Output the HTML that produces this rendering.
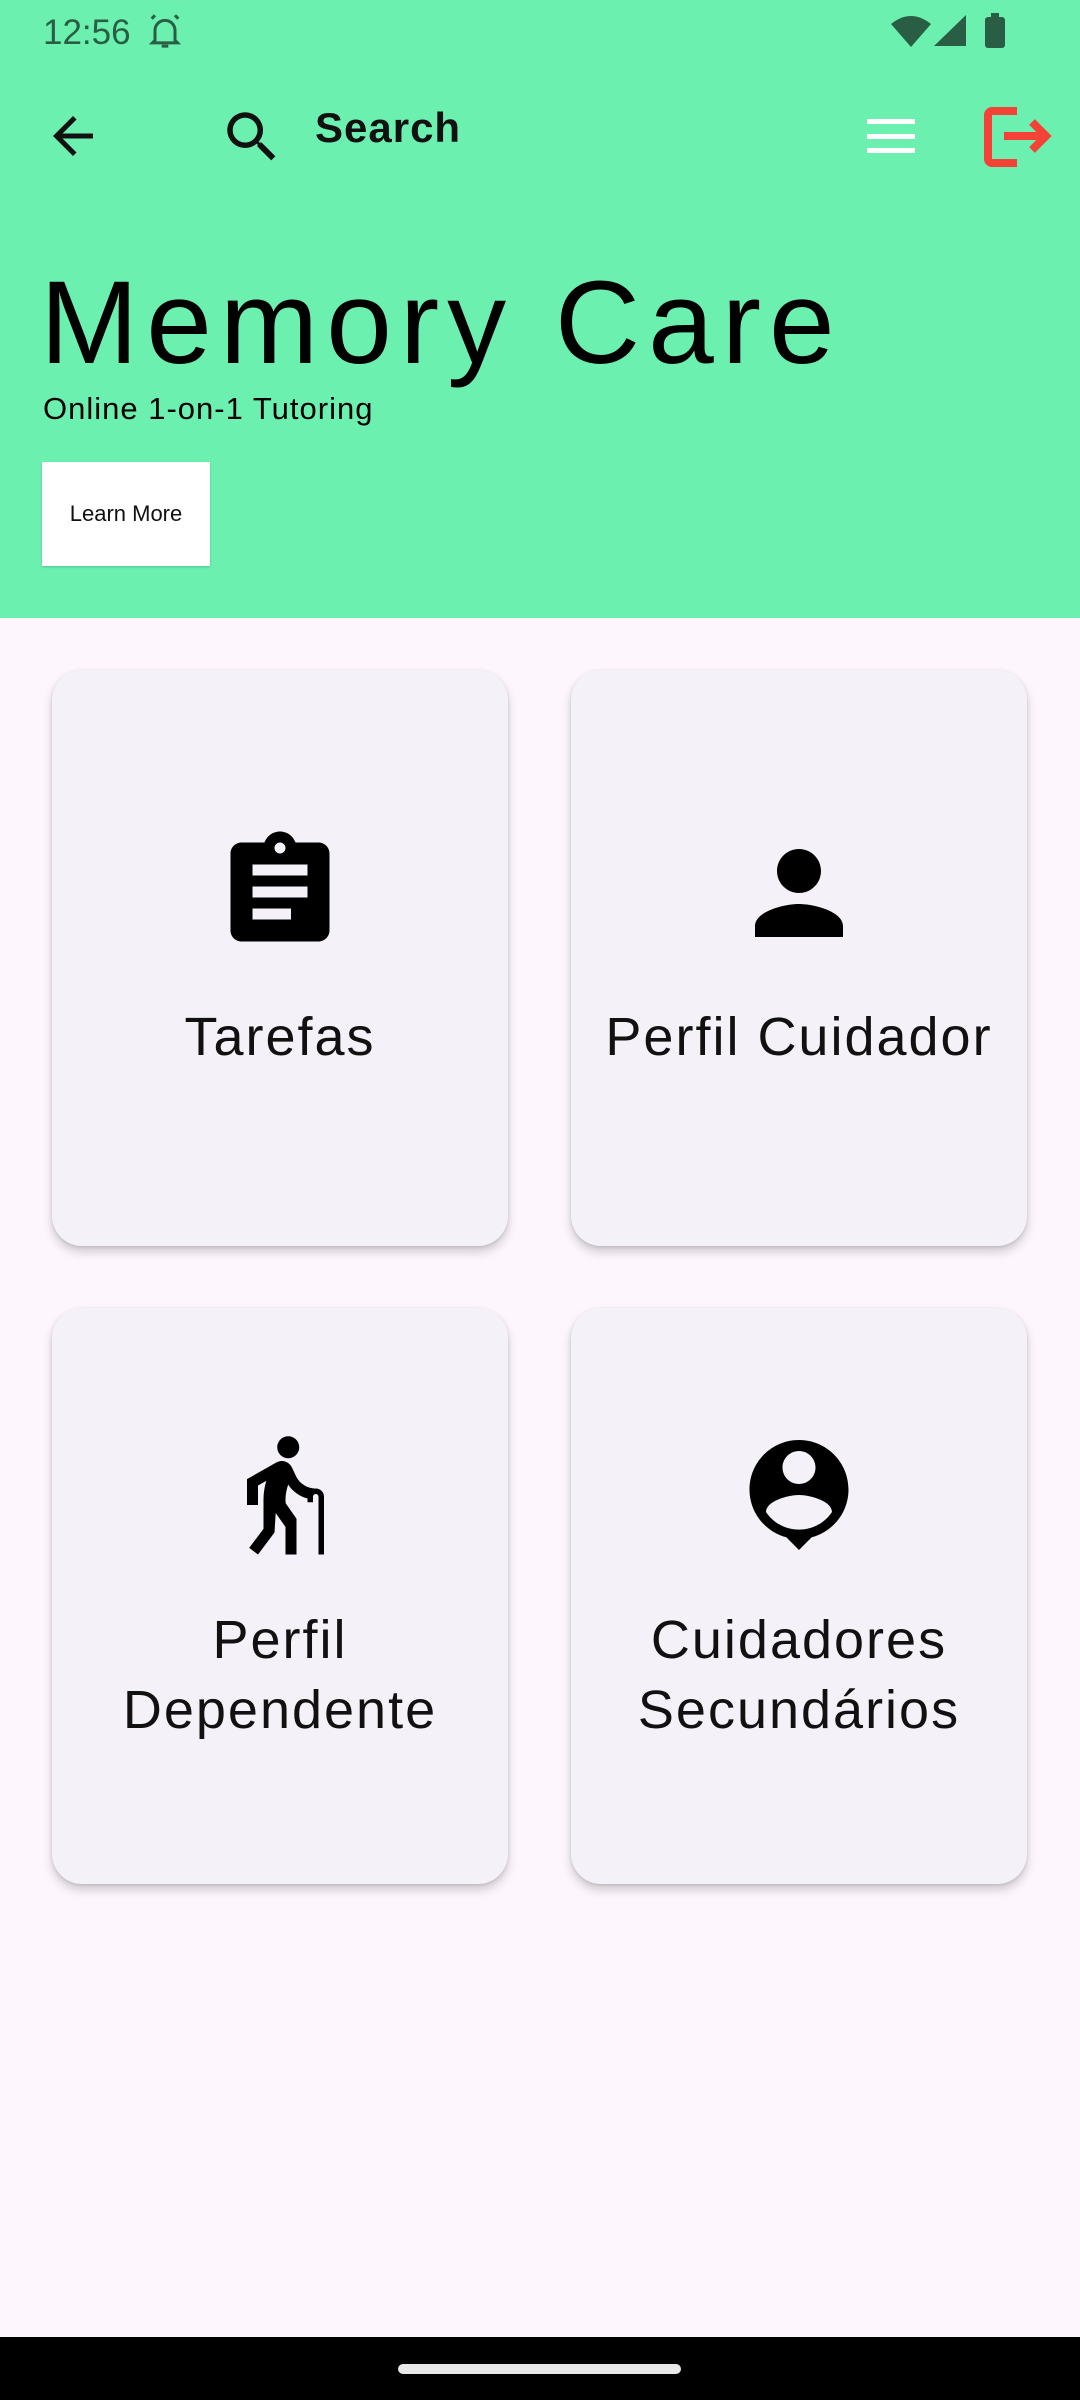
<!DOCTYPE html>
<html><head><meta charset="utf-8"><style>
*{margin:0;padding:0;box-sizing:border-box}
body{width:1080px;height:2400px;background:#fdf7fd;font-family:"Liberation Sans",sans-serif;position:relative;overflow:hidden}
.hdr{position:absolute;left:0;top:0;width:1080px;height:618px;background:#6cf0b0}
.abs{position:absolute}
.card{position:absolute;width:456px;height:576px;background:#f5f1f8;border-radius:30px;box-shadow:0 6px 10px rgba(0,0,0,0.18),0 1px 3px rgba(0,0,0,0.12)}
.lbl{position:absolute;left:0;width:100%;text-align:center;font-size:54px;letter-spacing:2px;color:#111;line-height:70px}
.card svg{position:absolute;width:132px;height:132px;left:162px}
</style></head><body>
<div class="hdr"></div>
<div class="abs" style="left:43px;top:13px;font-size:35px;color:#2a5e44">12:56</div>
<svg class="abs" style="left:145px;top:12px" width="40" height="40" viewBox="0 0 24 24"><path fill="none" stroke="#2a5e44" stroke-width="1.8" d="M6 17V11a6 6 0 0 1 12 0v6l1.5 1.5h-15zM10 20.5h4M4 4l2-2M20 4l-2-2"/></svg>
<svg class="abs" style="left:891px;top:14px" width="40" height="33" viewBox="0 0 40 33"><path fill="#2a5e44" d="M0 10Q20-6 40 10L20 33z"/></svg>
<svg class="abs" style="left:934px;top:15px" width="32" height="31"><path fill="#2a5e44" d="M32 0V31H0z"/></svg>
<div class="abs" style="left:985px;top:17px;width:20px;height:31px;background:#2a5e44;border-radius:3px"></div>
<div class="abs" style="left:991px;top:13px;width:8px;height:5px;background:#2a5e44"></div>
<svg class="abs" style="left:43px;top:106px" width="60" height="60" viewBox="0 0 24 24"><path fill="#111" d="M20 11H7.83l5.59-5.59L12 4l-8 8 8 8 1.41-1.41L7.83 13H20v-2z"/></svg>
<svg class="abs" style="left:219px;top:104px" width="66" height="66" viewBox="0 0 24 24"><path fill="#111" d="M15.5 14h-.79l-.28-.27A6.47 6.47 0 0 0 16 9.5 6.5 6.5 0 1 0 9.5 16c1.61 0 3.09-.59 4.23-1.57l.27.28v.79l5 4.99L20.49 19l-4.99-5zm-6 0C7.01 14 5 11.99 5 9.5S7.01 5 9.5 5 14 7.01 14 9.5 11.99 14 9.5 14z"/></svg>
<div class="abs" style="left:315px;top:104px;font-size:42px;font-weight:bold;color:#111;letter-spacing:1px">Search</div>
<div class="abs" style="left:867px;top:119px;width:48px;height:5px;background:#fff"></div>
<div class="abs" style="left:867px;top:134px;width:48px;height:5px;background:#fff"></div>
<div class="abs" style="left:867px;top:148px;width:48px;height:5px;background:#fff"></div>
<svg class="abs" style="left:980px;top:104px" width="76" height="66" viewBox="0 0 76 66"><path fill="none" stroke="#f44336" stroke-width="8" d="M37 7H12a4 4 0 0 0-4 4v44a4 4 0 0 0 4 4h25M24 32H66M52 18L66 32L52 46"/></svg>
<div class="abs" style="left:40px;top:258px;font-size:118px;letter-spacing:8px;color:#000;line-height:130px">Memory Care</div>
<div class="abs" style="left:43px;top:391px;font-size:31px;letter-spacing:1px;color:#000">Online 1-on-1 Tutoring</div>
<div class="abs" style="left:42px;top:462px;width:168px;height:104px;background:#fff;box-shadow:0 1px 2px rgba(0,0,0,0.2);font-size:22px;line-height:104px;text-align:center;color:#111">Learn More</div>

<div class="card" style="left:52px;top:670px">
<svg style="top:156px" viewBox="0 0 24 24"><path d="M19 3h-4.18C14.4 1.84 13.3 1 12 1c-1.3 0-2.4.84-2.82 2H5c-1.1 0-2 .9-2 2v14c0 1.1.9 2 2 2h14c1.1 0 2-.9 2-2V5c0-1.1-.9-2-2-2zm-7 0c.55 0 1 .45 1 1s-.45 1-1 1-1-.45-1-1 .45-1 1-1zm2 14H7v-2h7v2zm3-4H7v-2h10v2zm0-4H7V7h10v2z"/></svg>
<div class="lbl" style="top:332px">Tarefas</div></div>
<div class="card" style="left:571px;top:670px">
<svg style="top:157px" viewBox="0 0 24 24"><path d="M12 12c2.21 0 4-1.79 4-4s-1.790-4-4-4-4 1.79-4 4 1.79 4 4 4zm0 2c-2.67 0-8 1.34-8 4v2h16v-2c0-2.66-5.33-4-8-4z"/></svg>
<div class="lbl" style="top:332px">Perfil Cuidador</div></div>
<div class="card" style="left:52px;top:1308px">
<svg style="top:120px" viewBox="0 0 24 24"><path d="M13.5 5.5c1.09 0 2-.9 2-2s-.91-2-2-2-2 .9-2 2 .9 2 2 2zM20 12.5V23h-1V12.5c0-.28-.22-.5-.5-.5s-.5.22-.5.5v1h-1v-.69c-1.46-.38-2.7-1.29-3.51-2.52-.31.87-.49 1.78-.49 2.71 0 .23.02.46.03.69L15 16.5V23h-2v-5l-1.78-2.54L11 19l-3 4-1.6-1.2L9 18.33V13c0-1.15.18-2.29.5-3.39l-1.5.85V14H6V9.3l5.4-3.07v.01c.59-.31 1.32-.33 1.94.03.36.21.63.51.8.85l.79 1.67C15.58 10.1 16.94 11 18.5 11c.83 0 1.5.67 1.5 1.5z"/></svg>
<div class="lbl" style="top:297px">Perfil<br>Dependente</div></div>
<div class="card" style="left:571px;top:1308px">
<svg style="top:121px" viewBox="0 0 24 24"><path d="M12 2c-4.97 0-9 4.03-9 9 0 4.17 2.84 7.67 6.69 8.69L12 22l2.31-2.31C18.16 18.67 21 15.17 21 11c0-4.97-4.03-9-9-9zm0 2c1.66 0 3 1.34 3 3s-1.34 3-3 3-3-1.34-3-3 1.34-3 3-3zm0 14.3c-2.5 0-4.71-1.28-6-3.22.03-1.99 4-3.08 6-3.08 1.99 0 5.97 1.09 6 3.08-1.29 1.94-3.5 3.22-6 3.22z"/></svg>
<div class="lbl" style="top:297px">Cuidadores<br>Secundários</div></div>

<div class="abs" style="left:0;top:2337px;width:1080px;height:63px;background:#000"></div>
<div class="abs" style="left:398px;top:2364px;width:283px;height:10px;background:#e8e8e8;border-radius:5px"></div>
</body></html>
